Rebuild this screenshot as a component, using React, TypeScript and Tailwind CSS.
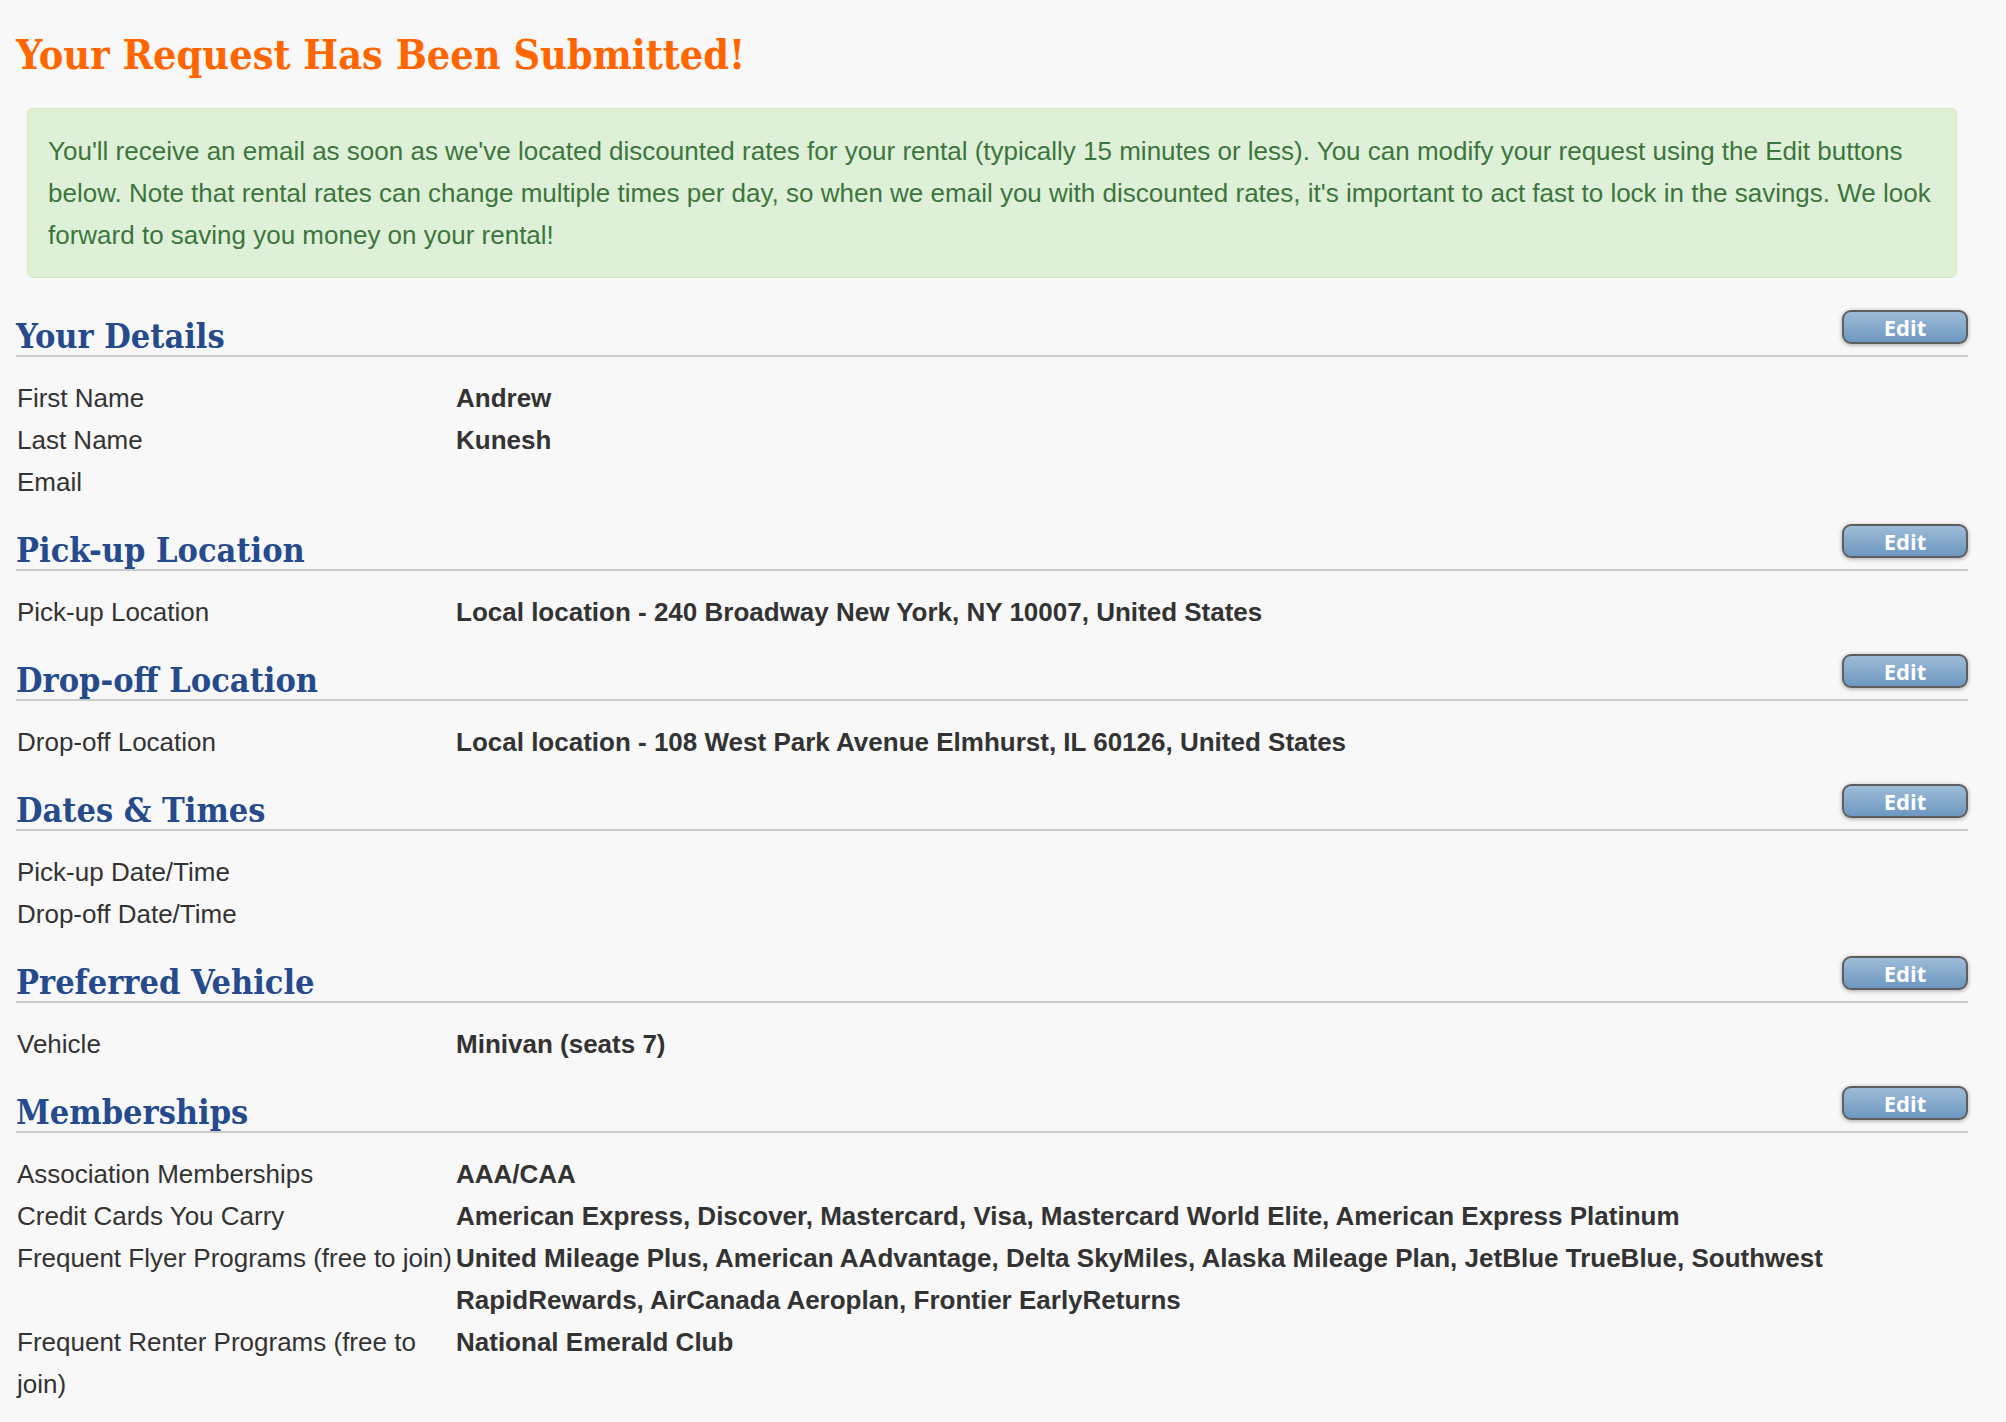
import React from 'react';

// Page data
type Row = { label: string; value?: string };
type Section = { title: string; rows: Row[] };

const SECTIONS: Section[] = [
  {
    title: 'Your Details',
    rows: [
      { label: 'First Name', value: 'Andrew' },
      { label: 'Last Name', value: 'Kunesh' },
      { label: 'Email' },
    ],
  },
  {
    title: 'Pick-up Location',
    rows: [{ label: 'Pick-up Location', value: 'Local location - 240 Broadway New York, NY 10007, United States' }],
  },
  {
    title: 'Drop-off Location',
    rows: [{ label: 'Drop-off Location', value: 'Local location - 108 West Park Avenue Elmhurst, IL 60126, United States' }],
  },
  {
    title: 'Dates & Times',
    rows: [{ label: 'Pick-up Date/Time' }, { label: 'Drop-off Date/Time' }],
  },
  {
    title: 'Preferred Vehicle',
    rows: [{ label: 'Vehicle', value: 'Minivan (seats 7)' }],
  },
  {
    title: 'Memberships',
    rows: [
      { label: 'Association Memberships', value: 'AAA/CAA' },
      {
        label: 'Credit Cards You Carry',
        value: 'American Express, Discover, Mastercard, Visa, Mastercard World Elite, American Express Platinum',
      },
      {
        label: 'Frequent Flyer Programs (free to join)',
        value:
          'United Mileage Plus, American AAdvantage, Delta SkyMiles, Alaska Mileage Plan, JetBlue TrueBlue, Southwest RapidRewards, AirCanada Aeroplan, Frontier EarlyReturns',
      },
      { label: 'Frequent Renter Programs (free to join)', value: 'National Emerald Club' },
    ],
  },
];

const slab = "font-['DejaVu_Serif_Condensed','DejaVu_Serif',serif]";

const EditButton: React.FC = () => (
  <button className="mb-[11px] flex h-[34px] w-[126px] items-center justify-center rounded-[9px] border-2 border-[#5e5e5e] bg-gradient-to-b from-[#9dbcd7] to-[#6e98c0] font-['Open_Sans',sans-serif] text-[22px] font-bold leading-none text-white shadow-[0_1px_4px_rgba(0,0,0,0.35)]">
    Edit
  </button>
);

const SectionBlock: React.FC<{ section: Section; first: boolean }> = ({ section, first }) => (
  <div>
    <div
      className={`flex h-[68px] items-end justify-between border-b-2 border-[#cbcbcb] ${first ? 'mt-[11px]' : ''}`}
    >
      <h2 className={`${slab} pb-[2px] text-[34px] font-bold leading-none text-[#254b8d]`}>{section.title}</h2>
      <EditButton />
    </div>
    <div className="pt-[20px]">
      {section.rows.map(row => (
        <div key={row.label} className="flex text-[26px] leading-[42px] text-[#333]">
          <div className="w-[440px] shrink-0 pl-[1px]">{row.label}</div>
          <div className="flex-1 font-bold">{row.value}</div>
        </div>
      ))}
    </div>
  </div>
);

const App: React.FC = () => {
  return (
    <div className="min-h-screen bg-[#f8f8f8] font-['Liberation_Sans',Arial,sans-serif]">
      <div className="ml-[16px] w-[1952px] pt-[35px]">
        <h1 className={`${slab} text-[41px] font-bold leading-none text-[#ff6600]`}>
          Your Request Has Been Submitted!
        </h1>

        <div className="mx-[11px] mt-[32px] rounded-[6px] border border-[#d6e9c6] bg-[#dff0d8] px-[20px] py-[21px] text-[26px] leading-[42px] text-[#3c763d]">
          You'll receive an email as soon as we've located discounted rates for your rental (typically 15 minutes or
          less). You can modify your request using the Edit buttons below. Note that rental rates can change multiple
          times per day, so when we email you with discounted rates, it's important to act fast to lock in the
          savings. We look forward to saving you money on your rental!
        </div>

        {SECTIONS.map((s, i) => (
          <SectionBlock key={s.title} section={s} first={i === 0} />
        ))}
      </div>
    </div>
  );
};

export default App;
